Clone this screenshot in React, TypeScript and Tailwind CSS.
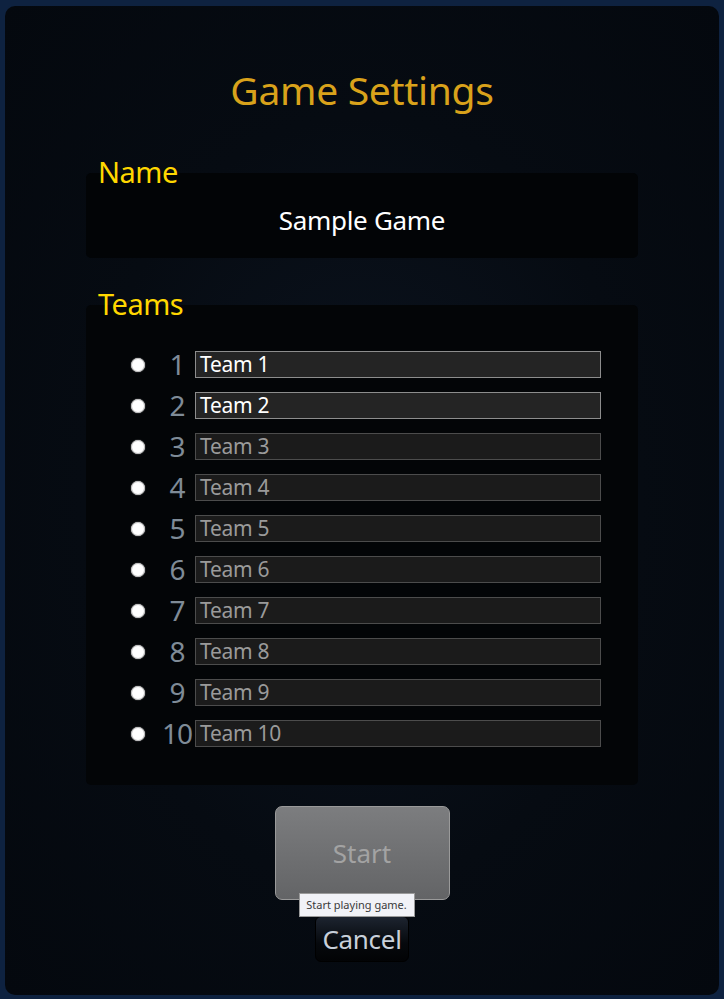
import React from 'react';

const teams = [
  { n: 1, name: 'Team 1', filled: true },
  { n: 2, name: 'Team 2', filled: true },
  { n: 3, name: 'Team 3', filled: false },
  { n: 4, name: 'Team 4', filled: false },
  { n: 5, name: 'Team 5', filled: false },
  { n: 6, name: 'Team 6', filled: false },
  { n: 7, name: 'Team 7', filled: false },
  { n: 8, name: 'Team 8', filled: false },
  { n: 9, name: 'Team 9', filled: false },
  { n: 10, name: 'Team 10', filled: false },
];

export default function App() {
  return (
    <div className="min-h-screen bg-[#0e2240] px-[5px] pt-[6px] pb-[4px] font-['Noto_Sans',sans-serif]">
      <div className="h-[989px] rounded-[10px] bg-[radial-gradient(ellipse_at_center,#0c1420_0%,#060b12_55%,#04080e_100%)] flex flex-col items-center">
        {/* Title */}
        <h1 className="mt-[58px] text-[39px] leading-[52px] text-[#d9a21b] tracking-[-0.3px]">
          Game Settings
        </h1>

        {/* Name */}
        <div className="mt-[43px] w-[552px] flex flex-col">
          <label className="relative z-10 ml-[12px] -mb-[17px] text-[29px] leading-[31px] -translate-y-[3px] text-[#ffd700] tracking-[-0.5px]">
            Name
          </label>
          <div className="h-[85px] rounded-[5px] bg-[#020406] flex items-center justify-center pt-[9px]">
            <span className="text-[26px] text-white tracking-[-0.3px]">Sample Game</span>
          </div>
        </div>

        {/* Teams */}
        <div className="mt-[33px] w-[552px] flex flex-col">
          <label className="relative z-10 ml-[12px] -mb-[17px] text-[29px] leading-[31px] -translate-y-[3px] text-[#ffd700] tracking-[-0.5px]">
            Teams
          </label>
          <div className="h-[480px] rounded-[5px] bg-[#030507] pt-[46px] pl-[45px] flex flex-col gap-[14px]">
            {teams.map((t) => (
              <div key={t.n} className="flex items-center h-[27px]">
                <span className="w-[14px] h-[14px] rounded-full bg-white border border-[#bbb] shadow-[0_0_1px_#fff]" />
                <span className="w-[50px] pl-[14px] text-center text-[28px] leading-[27px] text-[#7f8b97] tracking-[-1px]">
                  {t.n}
                </span>
                <div
                  className={
                    t.filled
                      ? 'w-[406px] h-[27px] border border-[#8d8d8d] bg-[#242424] flex items-center pl-[4px] text-[21px] text-white'
                      : 'w-[406px] h-[27px] border border-[#4c4c4c] bg-[#1b1b1b] flex items-center pl-[4px] text-[21px] text-[#9a9a9a]'
                  }
                >
                  <span className="leading-[25px] tracking-[-0.3px]">{t.name}</span>
                </div>
              </div>
            ))}
          </div>
        </div>

        {/* Buttons */}
        <div className="relative mt-[21px] flex flex-col items-center">
          <button className="w-[175px] h-[94px] rounded-[7px] border border-[#9a9a9a] bg-[linear-gradient(#7c7d7f,#636466)] text-[26px] text-[#a3a3a3]">
            Start
          </button>
          <div className="absolute top-[87px] left-[24px] z-20 w-[116px] h-[24px] bg-[#f1f2f7] border border-[#9a9a9a] flex items-center justify-center text-[11px] text-[#3a3a3a]">
            Start playing game.
          </div>
          <button className="mt-[16px] w-[94px] h-[46px] rounded-[6px] border border-[#000] bg-[linear-gradient(#1d2430,#06090d_60%,#020305)] text-[26px] leading-[30px] text-[#c8d0da] tracking-[-0.3px]">
            Cancel
          </button>
        </div>
      </div>
    </div>
  );
}
